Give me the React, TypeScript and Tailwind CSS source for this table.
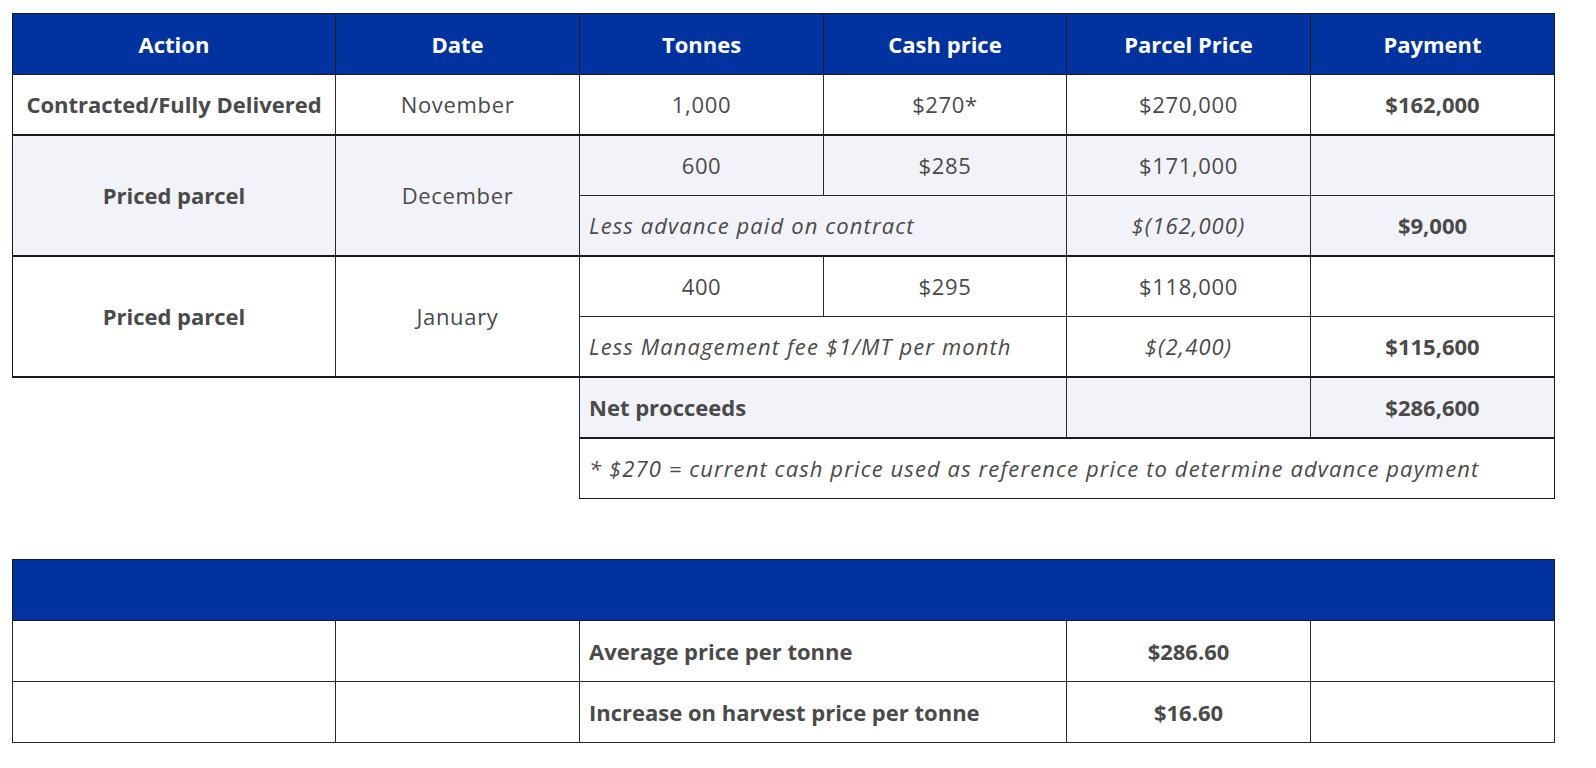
const font = { fontFamily: '"Open Sans", Lato, sans-serif' };

const th = 'h-[61px] border border-[#1a1a1a] bg-[#0033a0] text-white font-bold tracking-normal text-center';
const td = 'border border-[#2a2a2a] text-center';
const bold = 'font-bold tracking-normal';
const ital = 'italic tracking-[0.05em]';
const thickB = 'border-b-2 border-b-[#1a1a1a]';
const edgeL = 'border-l-[1.5px] border-l-[#1a1a1a]';
const edgeR = 'border-r-[1.5px] border-r-[#1a1a1a]';

function Cols() {
  return (
    <colgroup>
      <col className="w-[323px]" />
      <col className="w-[244px]" />
      <col className="w-[244px]" />
      <col className="w-[243px]" />
      <col className="w-[244px]" />
      <col className="w-[244px]" />
    </colgroup>
  );
}

export default function App() {
  return (
    <div
      className="h-screen overflow-hidden bg-white text-[22px] tracking-[0.03em] text-[#4a4a4a] pl-3 pt-[13px]"
      style={font}
    >
      <table className="w-[1542px] table-fixed border-collapse">
        <Cols />
        <thead>
          <tr>
            <th className={th}>Action</th>
            <th className={th}>Date</th>
            <th className={th}>Tonnes</th>
            <th className={th}>Cash price</th>
            <th className={th}>Parcel Price</th>
            <th className={th}>Payment</th>
          </tr>
        </thead>
        <tbody>
          <tr className="h-[60.6px]">
            <td className={`${td} ${bold} ${thickB} ${edgeL}`}>Contracted/Fully Delivered</td>
            <td className={`${td} ${thickB}`}>November</td>
            <td className={`${td} ${thickB}`}>1,000</td>
            <td className={`${td} ${thickB}`}>$270*</td>
            <td className={`${td} ${thickB}`}>$270,000</td>
            <td className={`${td} ${bold} ${thickB} ${edgeR}`}>$162,000</td>
          </tr>
          <tr className="h-[60.6px] bg-[#f2f3f8]">
            <td rowSpan={2} className={`${td} ${bold} ${thickB} ${edgeL}`}>Priced parcel</td>
            <td rowSpan={2} className={`${td} ${thickB}`}>December</td>
            <td className={td}>600</td>
            <td className={td}>$285</td>
            <td className={td}>$171,000</td>
            <td className={`${td} ${edgeR}`}></td>
          </tr>
          <tr className="h-[60.6px] bg-[#f2f3f8]">
            <td colSpan={2} className={`${td} ${thickB} ${ital} text-left pl-[9px]`}>Less advance paid on contract</td>
            <td className={`${td} ${thickB} ${ital}`}>$(162,000)</td>
            <td className={`${td} ${thickB} ${bold} ${edgeR}`}>$9,000</td>
          </tr>
          <tr className="h-[60.6px]">
            <td rowSpan={2} className={`${td} ${bold} ${thickB} ${edgeL}`}>Priced parcel</td>
            <td rowSpan={2} className={`${td} ${thickB}`}>January</td>
            <td className={td}>400</td>
            <td className={td}>$295</td>
            <td className={td}>$118,000</td>
            <td className={`${td} ${edgeR}`}></td>
          </tr>
          <tr className="h-[60.6px]">
            <td colSpan={2} className={`${td} ${thickB} ${ital} text-left pl-[9px]`}>Less Management fee $1/MT per month</td>
            <td className={`${td} ${thickB} ${ital}`}>$(2,400)</td>
            <td className={`${td} ${thickB} ${bold} ${edgeR}`}>$115,600</td>
          </tr>
          <tr className="h-[60.6px]">
            <td colSpan={2} className="border-none"></td>
            <td colSpan={2} className={`${td} ${thickB} bg-[#f2f3f8] ${bold} text-left pl-[9px]`}>Net procceeds</td>
            <td className={`${td} ${thickB} bg-[#f2f3f8]`}></td>
            <td className={`${td} ${thickB} bg-[#f2f3f8] ${bold} ${edgeR}`}>$286,600</td>
          </tr>
          <tr className="h-[60.6px]">
            <td colSpan={2} className="border-none"></td>
            <td
              colSpan={4}
              className={`${td} border-b-[1.5px] border-b-[#1a1a1a] ${edgeR} ${ital} text-left pl-[9px]`}
            >
              * $270 = current cash price used as reference price to determine advance payment
            </td>
          </tr>
        </tbody>
      </table>

      <table className="mt-[60px] w-[1542px] table-fixed border-collapse border-[1.5px] border-[#1a1a1a]">
        <Cols />
        <thead>
          <tr>
            <th colSpan={6} className={th}></th>
          </tr>
        </thead>
        <tbody>
          <tr className="h-[61px]">
            <td className={td}></td>
            <td className={td}></td>
            <td colSpan={2} className={`${td} ${bold} text-left pl-[9px]`}>Average price per tonne</td>
            <td className={`${td} ${bold}`}>$286.60</td>
            <td className={td}></td>
          </tr>
          <tr className="h-[61px]">
            <td className={td}></td>
            <td className={td}></td>
            <td colSpan={2} className={`${td} ${bold} text-left pl-[9px]`}>Increase on harvest price per tonne</td>
            <td className={`${td} ${bold}`}>$16.60</td>
            <td className={td}></td>
          </tr>
        </tbody>
      </table>
    </div>
  );
}
